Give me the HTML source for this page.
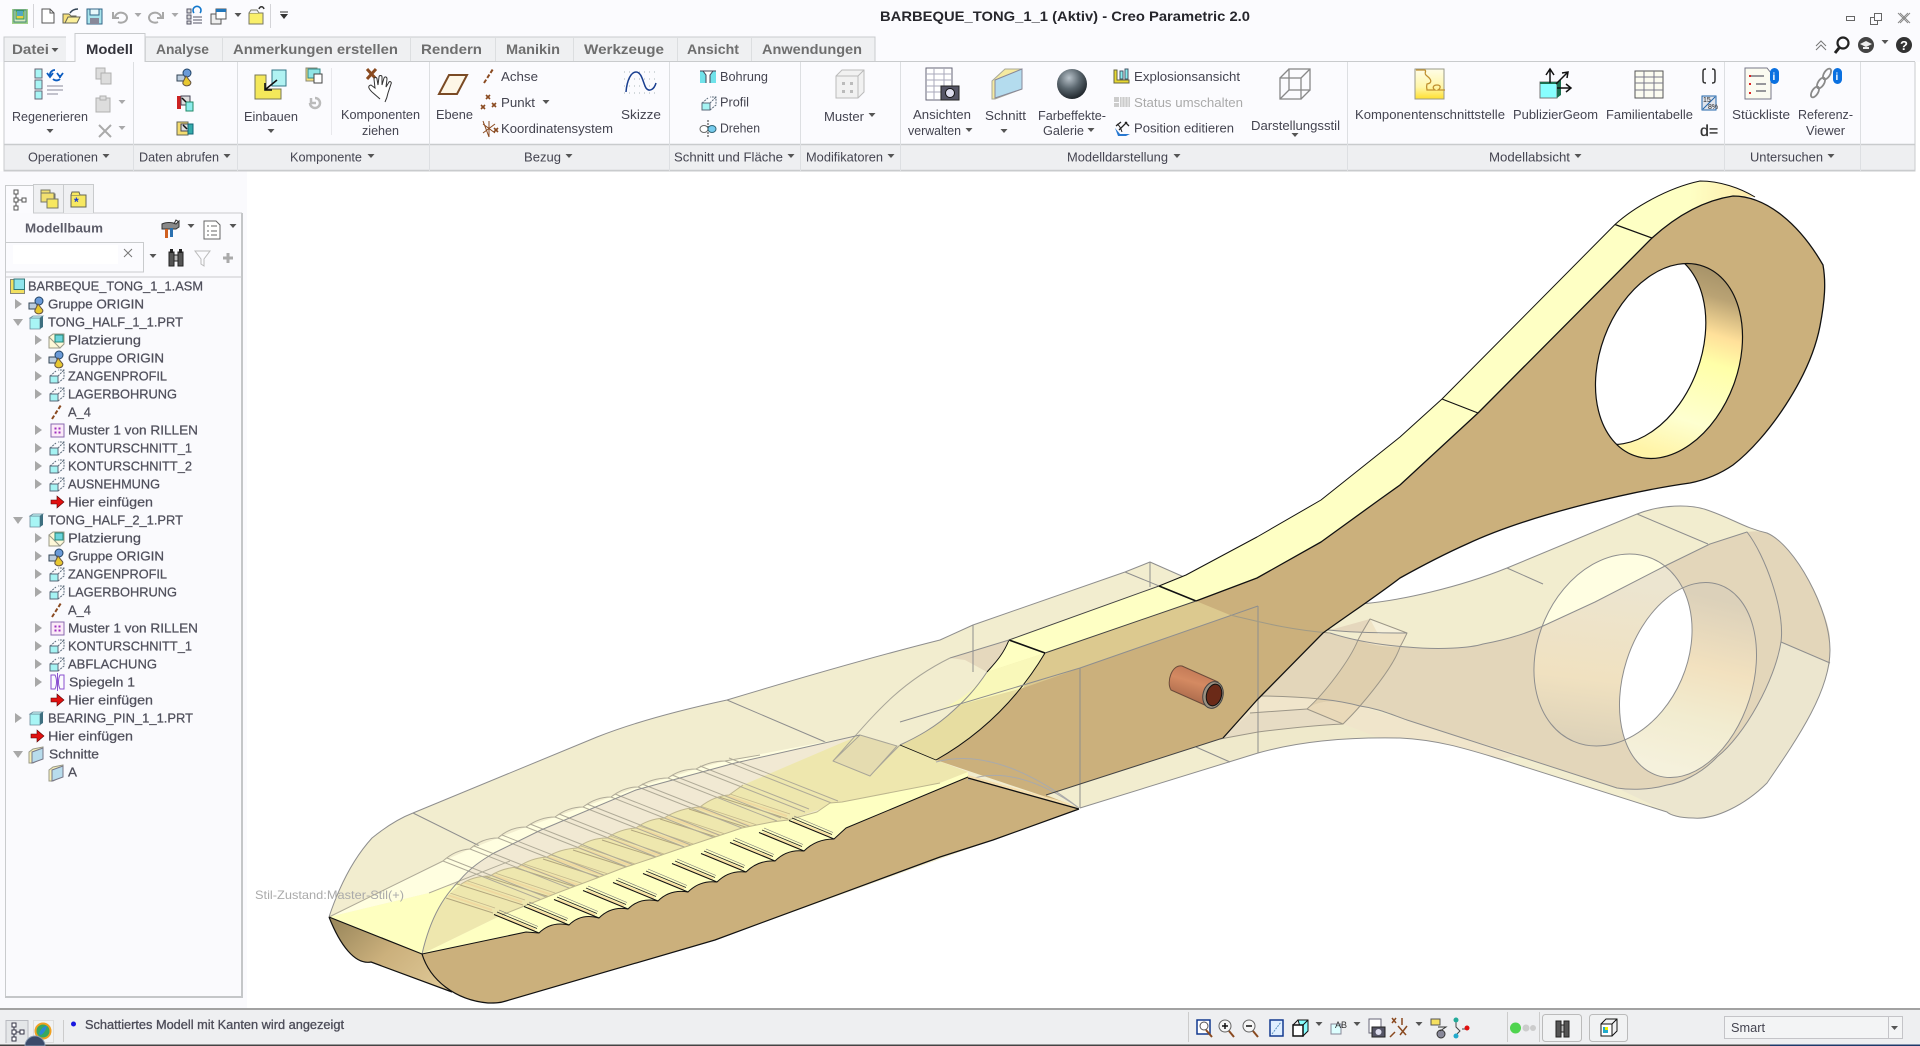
<!DOCTYPE html>
<html><head><meta charset="utf-8"><style>
html,body{margin:0;padding:0;background:#fff;width:1920px;height:1046px;overflow:hidden}
svg{display:block;font-family:"Liberation Sans",Arial,sans-serif}
text{font-size:12.5px;fill:#444450}
.t{font-size:14px;font-weight:bold;fill:#6e6e6e}
.r{font-size:13px;fill:#50505c;stroke:#50505c;stroke-width:.25}
.g{fill:none;stroke:#8e8e8e;stroke-width:1}
.b{fill:none;stroke:#111;stroke-width:1.3}
</style></head><body>
<svg width="1920" height="1046" viewBox="0 0 1920 1046" xmlns="http://www.w3.org/2000/svg">
<defs>
<path id="dd" d="M-3.5,-2h7l-3.5,4z" fill="#555"/>
<path id="tr" d="M-3,-5l7,5l-7,5z" fill="#a8a8a8"/>
<path id="td" d="M-5,-3h10l-5,7z" fill="#a8a8a8"/>
<g id="prf"><path d="M1,8h8v7h-8z" fill="#a5f3f3" stroke="#5a6a7a"/><path d="M1,8l6,-5M9,8l6,-6M9,15l6,-5V2H9" fill="none" stroke="#5a6a7a" stroke-dasharray="2 1"/></g>
<g id="cube"><path d="M1,3h10v11h-10z" fill="#a8f5f5" stroke="#6a8a9a" stroke-width=".8"/><path d="M1,3l3,-2h10l-3,2z" fill="#c8fafa" stroke="#6a8a9a" stroke-width=".8"/><path d="M11,3l3,-2v11l-3,2z" fill="#3e6f80"/></g>
<g id="org"><path d="M0,6h8v6h-8z" fill="#bcd" stroke="#345"/><circle cx="10" cy="4" r="4" fill="#6a9ad8" stroke="#246"/><path d="M9,7l4,5a4,3 0 1 1 -7,1z" fill="#e8c830" stroke="#654"/></g>
<g id="axi"><path d="M2,15L11,1" stroke="#8a4a20" stroke-width="2" stroke-dasharray="4 2" fill="none"/></g>
<g id="mus"><rect x="1" y="1" width="13" height="13" fill="#fbeaf8" stroke="#8a6ab0"/><path d="M5,5h1v1h-1zM9,5h1v1h-1zM5,9h1v1h-1zM9,9h1v1h-1z" fill="#a030c0" stroke="#a030c0"/></g>
<g id="hie"><path d="M0,5h6v-4l7,6l-7,6v-4h-6z" fill="#e01010" stroke="#500" stroke-width=".6"/></g>
<g id="sec"><path d="M0,5l4,-3l10,-2v11l-10,5l-4,0z" fill="#f6efb8" stroke="#998"/><path d="M3,5l11,-4v11l-11,4z" fill="#b8dcec" stroke="#778"/></g>
<g id="pla"><path d="M0,4h11v11h-11z" fill="#fdf8d8" stroke="#998"/><path d="M0,4l4,-3h11v10l-4,4z" fill="#fdf8d8" stroke="#998"/><path d="M6,2h8v7h-8z" fill="#6cd4dc" stroke="#287"/></g>
<g id="ridB" fill="none"><path d="M-4,-3L-41,-18" stroke="#f9e0a2" stroke-width="2.400"/><path d="M0,0L-45,-18.500" stroke="#111" stroke-width="1.100"/><path d="M-2,-4.500L-42,-21" stroke="#222" stroke-width=".8"/><path d="M-1,-6.500L-40,-23" stroke="#777" stroke-width=".6"/></g>
<g id="ridT" fill="none"><path d="M-47,-23L-112,-45" stroke="#f0d9a0" stroke-width="2"/><path d="M-46,-20L-115,-42" stroke="#b2a67e" stroke-width="1"/><path d="M-44,-25L-110,-47" stroke="#c4b78c" stroke-width=".8"/></g>
<linearGradient id="wall" x1="1710" y1="270" x2="1650" y2="462" gradientUnits="userSpaceOnUse"><stop offset="0" stop-color="#a8946a"/><stop offset=".12" stop-color="#baa374"/><stop offset=".3" stop-color="#ffe09a"/><stop offset=".44" stop-color="#ffffa8"/><stop offset=".75" stop-color="#feffd0"/><stop offset=".95" stop-color="#fff4a8"/></linearGradient>
<linearGradient id="wall2" x1="1720" y1="600" x2="1680" y2="770" gradientUnits="userSpaceOnUse"><stop offset="0" stop-color="#dcd1ba"/><stop offset=".4" stop-color="#f2e1bf"/><stop offset=".7" stop-color="#f2ecd0"/><stop offset="1" stop-color="#f5f1dc"/></linearGradient>
<linearGradient id="wall3" x1="1600" y1="580" x2="1580" y2="745" gradientUnits="userSpaceOnUse"><stop offset="0" stop-color="#ece5d0"/><stop offset=".6" stop-color="#f0e1c0"/><stop offset="1" stop-color="#dcd1b8"/></linearGradient>
<linearGradient id="rimg" x1="1690" y1="190" x2="1755" y2="195" gradientUnits="userSpaceOnUse"><stop offset="0" stop-color="#feffc4"/><stop offset="1" stop-color="#ffe9a8"/></linearGradient>
<linearGradient id="capg" x1="340" y1="920" x2="420" y2="1000" gradientUnits="userSpaceOnUse"><stop offset="0" stop-color="#9d8a5e"/><stop offset=".5" stop-color="#cbb07c"/><stop offset="1" stop-color="#dcc593"/></linearGradient>
<linearGradient id="pin" x1="1192" y1="660" x2="1180" y2="700" gradientUnits="userSpaceOnUse"><stop offset="0" stop-color="#b87050"/><stop offset=".5" stop-color="#d48a62"/><stop offset="1" stop-color="#a8684a"/></linearGradient>
<linearGradient id="kmp" x1="0" y1="0" x2="0" y2="1"><stop offset="0" stop-color="#fffde8"/><stop offset=".6" stop-color="#fff6a8"/><stop offset="1" stop-color="#ffe030"/></linearGradient>
<radialGradient id="sph" cx=".4" cy=".3" r=".8"><stop offset="0" stop-color="#b8c2ca"/><stop offset=".45" stop-color="#5c6870"/><stop offset="1" stop-color="#10151a"/></radialGradient>
<clipPath id="c1"><ellipse cx="1669" cy="361" rx="100.8" ry="68.9" transform="rotate(-69.6 1669 361)"/></clipPath>
<clipPath id="c2"><ellipse cx="1688" cy="680" rx="100.3" ry="64.4" transform="rotate(-72.3 1688 680)"/></clipPath>
<clipPath id="c3"><ellipse cx="1613" cy="650" rx="99.5" ry="74.6" transform="rotate(-66.6 1613 650)"/></clipPath>
<clipPath id="ct"><path d="M460,885Q472,876 490,876Q502,868 518,867Q531,858 547,857Q560,849 577,848Q590,838 607,838Q620,829 636,828Q648,819 664,818Q680,808 700,807Q714,796 729,795L743,785L860,735L897,746L900,745L936,760L968,772L940,783L842,802L502,915L422,954C431,915 445,895 460,880Z"/></clipPath>
</defs>

<!-- backgrounds -->
<rect width="1920" height="1046" fill="#fff"/>
<rect width="1920" height="62" fill="#fbfbfe"/>
<rect x="0" y="171" width="247" height="838" fill="#fafafd"/>
<rect x="4" y="62" width="1911" height="82" fill="#fbfbfe"/>
<rect x="4" y="145" width="1911" height="26" fill="#eeeff1"/>
<path d="M4,62V171H1915V62" fill="none" stroke="#c9cbcd" stroke-width="1"/>
<path d="M4,144.5H1915M4,170.5H1915" stroke="#c9cbcd" stroke-width="1.5"/>
<path d="M133.500,62V171M237.500,62V171M429.500,62V171M669.500,62V171M800.500,62V171M900.500,62V171M1347.500,62V171M1724.500,62V171M1860.500,62V171" stroke="#dddfe2"/>
<path d="M331.500,68V135" stroke="#e8e8ec"/>

<!-- tabs -->
<rect x="4" y="37" width="871" height="24.500" fill="#eff0f2" stroke="#c9cbcd"/>
<path d="M66.500,37V62M145.500,37V62M222.500,37V62M410.500,37V62M495.500,37V62M573.500,37V62M677.500,37V62M751.500,37V62" stroke="#dcdee0"/>
<path d="M66,36h9v26h-9z" fill="#fbfbfe"/>
<path d="M66,61.500H75" stroke="#c9cbcd"/>
<path d="M75,62V33.500h70V62" fill="#fbfbfe" stroke="#c9cbcd"/>
<path d="M4,61.500H75M145,61.500H1915" stroke="#c9cbcd" stroke-width="1"/>
<text class="t" x="12" y="54" textLength="37" lengthAdjust="spacingAndGlyphs">Datei</text><use href="#dd" x="55" y="50"/>
<text class="t" x="86" y="54" textLength="47" lengthAdjust="spacingAndGlyphs" style="fill:#33333b">Modell</text>
<text class="t" x="156" y="54" textLength="53" lengthAdjust="spacingAndGlyphs">Analyse</text>
<text class="t" x="233" y="54" textLength="165" lengthAdjust="spacingAndGlyphs">Anmerkungen erstellen</text>
<text class="t" x="421" y="54" textLength="61" lengthAdjust="spacingAndGlyphs">Rendern</text>
<text class="t" x="506" y="54" textLength="54" lengthAdjust="spacingAndGlyphs">Manikin</text>
<text class="t" x="584" y="54" textLength="80" lengthAdjust="spacingAndGlyphs">Werkzeuge</text>
<text class="t" x="687" y="54" textLength="52" lengthAdjust="spacingAndGlyphs">Ansicht</text>
<text class="t" x="762" y="54" textLength="100" lengthAdjust="spacingAndGlyphs">Anwendungen</text>

<!-- title -->
<text x="880" y="21" textLength="370" lengthAdjust="spacingAndGlyphs" style="font-size:14px;font-weight:bold;fill:#26262c">BARBEQUE_TONG_1_1 (Aktiv) - Creo Parametric 2.0</text>

<!-- quick access -->
<g>
<rect x="12" y="9" width="16" height="15" fill="#9fd08a"/><rect x="14" y="10" width="12" height="12" fill="#d8e8c0" stroke="#487"/><rect x="16" y="11" width="8" height="8" fill="#e8d040" stroke="#296"/><rect x="17" y="11" width="6" height="5" fill="#50a8c0"/>
<path d="M33.500,4V28M270.500,4V28" stroke="#d4d4d8"/>
<path d="M42,9h8l4,4v10h-12z" fill="#fff" stroke="#555"/><path d="M50,9v4h4" fill="none" stroke="#555"/>
<path d="M63,14h6l2,2h5v7h-13z" fill="#f7e07a" stroke="#665"/><path d="M65,23l3,-6h12l-3,6z" fill="#fbef9a" stroke="#665"/><path d="M70,13c2,-3 5,-4 8,-4" fill="none" stroke="#345" stroke-width="1.600"/>
<rect x="87" y="9" width="15" height="15" fill="#a8e4ec" stroke="#368"/><rect x="90" y="9" width="9" height="6" fill="#e8f8fa" stroke="#368"/><rect x="90" y="18" width="9" height="6" fill="#889"/>
<path d="M115,18a6,5 0 1 1 3,4M113,12v6h6" fill="none" stroke="#a8a8a8" stroke-width="2"/>
<use href="#dd" x="138" y="15" opacity=".5"/>
<path d="M161,18a6,5 0 1 0 -3,4M163,12v6h-6" fill="none" stroke="#a8a8a8" stroke-width="2"/>
<use href="#dd" x="175" y="15" opacity=".5"/>
<path d="M187,9h4v4h-4zM187,15h4v4h-4zM187,21h4v3h-4z" fill="#ddd" stroke="#556"/><path d="M193,17h9M193,20h9M193,23h9" stroke="#556"/><path d="M194,13a4,4 0 1 1 6,0" fill="none" stroke="#17c" stroke-width="1.600"/>
<rect x="211" y="14" width="10" height="10" fill="#eee" stroke="#555"/><rect x="216" y="9" width="10" height="10" fill="#fff" stroke="#555"/><rect x="216" y="9" width="10" height="3" fill="#27b"/>
<use href="#dd" x="238" y="15"/>
<path d="M249,13h14v11h-14z" fill="#f9ef6a" stroke="#776"/><path d="M249,13l2,-3h6l2,3" fill="#eee" stroke="#776"/><path d="M259,9c1,-3 4,-3 5,0" fill="none" stroke="#333" stroke-width="1.500"/>
<path d="M280,12h8" stroke="#333"/><path d="M280,14h8l-4,5z" fill="#333"/>
</g>

<!-- window controls -->
<g stroke="#666" fill="none">
<rect x="1846.500" y="16.500" width="8" height="4"/>
<rect x="1870.500" y="17.500" width="7" height="7"/><rect x="1874.500" y="13.500" width="7" height="7" fill="#fbfbfe"/>
<path d="M1898,13l10,10M1908,13l-10,10M1900,13l10,10M1910,13l-10,10" stroke="#888"/>
<path d="M1816,46l5,-5l5,5M1816,50l5,-5l5,5" stroke="#777"/>
<circle cx="1843" cy="43" r="5.500" stroke="#222" stroke-width="2.200"/><path d="M1839,48l-4,5" stroke="#222" stroke-width="3"/>
</g>
<circle cx="1866" cy="45" r="8" fill="#444"/><path d="M1860,44l6,-3l6,3l-6,3zM1863,47v2h6v-2" fill="#eee"/>
<use href="#dd" x="1885" y="42"/>
<circle cx="1904" cy="45" r="8" fill="#333"/><text x="1900" y="50" style="font-size:13px;font-weight:bold;fill:#fff">?</text>

<!-- ribbon texts -->
<text x="12" y="121" textLength="76" lengthAdjust="spacingAndGlyphs">Regenerieren</text><use href="#dd" x="50" y="131"/>
<text x="244" y="121" textLength="54" lengthAdjust="spacingAndGlyphs">Einbauen</text><use href="#dd" x="271" y="131"/>
<text x="341" y="119" textLength="79" lengthAdjust="spacingAndGlyphs">Komponenten</text>
<text x="362" y="135" textLength="37" lengthAdjust="spacingAndGlyphs">ziehen</text>
<text x="436" y="119" textLength="37" lengthAdjust="spacingAndGlyphs">Ebene</text>
<text x="501" y="81" textLength="37" lengthAdjust="spacingAndGlyphs">Achse</text>
<text x="501" y="107" textLength="34" lengthAdjust="spacingAndGlyphs">Punkt</text><use href="#dd" x="546" y="102"/>
<text x="501" y="133" textLength="112" lengthAdjust="spacingAndGlyphs">Koordinatensystem</text>
<text x="621" y="119" textLength="40" lengthAdjust="spacingAndGlyphs">Skizze</text>
<text x="720" y="81" textLength="48" lengthAdjust="spacingAndGlyphs">Bohrung</text>
<text x="720" y="106.500" textLength="29" lengthAdjust="spacingAndGlyphs">Profil</text>
<text x="720" y="132.500" textLength="40" lengthAdjust="spacingAndGlyphs">Drehen</text>
<text x="824" y="121" textLength="40" lengthAdjust="spacingAndGlyphs">Muster</text><use href="#dd" x="872" y="115"/>
<text x="913" y="119" textLength="58" lengthAdjust="spacingAndGlyphs">Ansichten</text>
<text x="908" y="135" textLength="53" lengthAdjust="spacingAndGlyphs">verwalten</text><use href="#dd" x="969" y="130"/>
<text x="985" y="120" textLength="41" lengthAdjust="spacingAndGlyphs">Schnitt</text><use href="#dd" x="1004" y="131"/>
<text x="1038" y="120" textLength="68" lengthAdjust="spacingAndGlyphs">Farbeffekte-</text>
<text x="1043" y="135" textLength="41" lengthAdjust="spacingAndGlyphs">Galerie</text><use href="#dd" x="1091" y="130"/>
<text x="1134" y="81" textLength="106" lengthAdjust="spacingAndGlyphs">Explosionsansicht</text>
<text x="1134" y="107" textLength="109" lengthAdjust="spacingAndGlyphs" style="fill:#aaa">Status umschalten</text>
<text x="1134" y="132.500" textLength="100" lengthAdjust="spacingAndGlyphs">Position editieren</text>
<text x="1251" y="130" textLength="89" lengthAdjust="spacingAndGlyphs">Darstellungsstil</text><use href="#dd" x="1295" y="135"/>
<text x="1355" y="119" textLength="150" lengthAdjust="spacingAndGlyphs">Komponentenschnittstelle</text>
<text x="1513" y="119" textLength="85" lengthAdjust="spacingAndGlyphs">PublizierGeom</text>
<text x="1606" y="119" textLength="87" lengthAdjust="spacingAndGlyphs">Familientabelle</text>
<text x="1732" y="119" textLength="58" lengthAdjust="spacingAndGlyphs">Stückliste</text>
<text x="1798" y="119" textLength="55" lengthAdjust="spacingAndGlyphs">Referenz-</text>
<text x="1806" y="135" textLength="39" lengthAdjust="spacingAndGlyphs">Viewer</text>

<!-- group labels -->
<text x="28" y="161.500" textLength="70" lengthAdjust="spacingAndGlyphs">Operationen</text><use href="#dd" x="106" y="156"/>
<text x="139" y="161.500" textLength="80" lengthAdjust="spacingAndGlyphs">Daten abrufen</text><use href="#dd" x="227" y="156"/>
<text x="290" y="161.500" textLength="72" lengthAdjust="spacingAndGlyphs">Komponente</text><use href="#dd" x="371" y="156"/>
<text x="524" y="161.500" textLength="37" lengthAdjust="spacingAndGlyphs">Bezug</text><use href="#dd" x="569" y="156"/>
<text x="674" y="161.500" textLength="109" lengthAdjust="spacingAndGlyphs">Schnitt und Fläche</text><use href="#dd" x="791" y="156"/>
<text x="806" y="161.500" textLength="77" lengthAdjust="spacingAndGlyphs">Modifikatoren</text><use href="#dd" x="891" y="156"/>
<text x="1067" y="161.500" textLength="101" lengthAdjust="spacingAndGlyphs">Modelldarstellung</text><use href="#dd" x="1177" y="156"/>
<text x="1489" y="161.500" textLength="81" lengthAdjust="spacingAndGlyphs">Modellabsicht</text><use href="#dd" x="1578" y="156"/>
<text x="1750" y="161.500" textLength="73" lengthAdjust="spacingAndGlyphs">Untersuchen</text><use href="#dd" x="1831" y="156"/>

<!-- ribbon icons -->
<g>
<!-- regen -->
<g fill="#a8f5f5" stroke="#667"><rect x="35" y="69" width="7" height="9"/><rect x="35" y="80" width="7" height="9"/><rect x="35" y="91" width="7" height="8"/></g>
<path d="M47,86h16M47,90h16M47,94h11" stroke="#889"/>
<path d="M50,76a5,5 0 0 1 5,-6M47,73l3,4l3,-4M53,79a5,5 0 0 0 7,0M63,73l-3,4l-3,-4M60,78v-3" fill="none" stroke="#0b5cc0" stroke-width="1.800"/>
<!-- gray edit -->
<g fill="#ddd" stroke="#b0b0b0"><rect x="96" y="68" width="9" height="11"/><rect x="101" y="73" width="10" height="11"/><rect x="96" y="98" width="14" height="14"/><rect x="100" y="96" width="6" height="4"/></g>
<path d="M99,125l12,12M111,125l-12,12" stroke="#aaa" stroke-width="2"/>
<use href="#dd" x="122" y="102" opacity=".5"/><use href="#dd" x="122" y="128" opacity=".5"/>
<!-- data -->
<use href="#org" transform="translate(177,69)"/>
<path d="M177,96h4v13h-4z" fill="#c22"/><rect x="181" y="96" width="9" height="9" fill="#ddd" stroke="#445"/><rect x="186" y="102" width="7" height="9" fill="#8cecec" stroke="#286"/><path d="M182,98l4,4" stroke="#111" stroke-width="1.500"/>
<path d="M177,122h11v13h-11z" fill="#f4dc70" stroke="#665"/><rect x="181" y="124" width="8" height="7" fill="#ddd" stroke="#445"/><rect x="188" y="124" width="5" height="10" fill="#3aa" stroke="#167"/><path d="M183,125l4,4" stroke="#111" stroke-width="1.500"/>
<!-- einbauen -->
<path d="M255,75h11v14h15v10h-26z" fill="#f4e85a" stroke="#775"/>
<path d="M272,70h14v16h-14z" fill="#b0f2f2" stroke="#378"/>
<path d="M277,80l-11,9M265,83v7h7" fill="none" stroke="#111" stroke-width="1.600"/>
<rect x="306" y="68" width="11" height="13" fill="#f6e07a" stroke="#887" /><rect x="308" y="69" width="12" height="9" fill="#8fe5e5" stroke="#388"/><path d="M315,74h7v9h-8v-9z" fill="#fff" stroke="#444"/>
<path d="M310,103a5,5 0 1 0 5,-5M311,98v5h5" fill="none" stroke="#bbb" stroke-width="2.500"/>
<!-- hand -->
<path d="M367,69l9,10M376,69l-9,10" stroke="#8a4a20" stroke-width="3"/>
<path d="M372,92c-3,-3 -5,-6 -1,-7l4,3l-1,-9c0,-2 3,-2 3,0l1,6l1,-8c0,-2 3,-2 3,0l0,8l2,-7c1,-2 3,-1 3,1l-1,8l3,-5c1,-1 3,0 2,2l-3,9c-1,5 -2,7 -3,9" fill="#fff" stroke="#333"/><path d="M372,92l8,7" stroke="#333"/>
<!-- ebene -->
<path d="M449,75h18l-10,19h-18z" fill="#fdf6e6" stroke="#7a4a24" stroke-width="2"/>
<use href="#axi" transform="translate(482,68)"/>
<g stroke="#8a4a20" stroke-width="1.600"><path d="M486,95l4,4M490,95l-4,4M481,105l4,4M485,105l-4,4M492,103l4,4M496,103l-4,4"/><path d="M483,121l6,16M495,124l-12,9M483,124l12,9M489,121v16" stroke-width="1"/><path d="M494,128l4,4M498,128l-4,4"/></g>
<!-- skizze -->
<path d="M624,72h33M624,79h33M624,86h33M624,93h33" fill="none" stroke="#a8b4b8" stroke-dasharray="1 4"/>
<path d="M626,92c1,-12 5,-20 10,-20c6,0 7,11 10,16c3,4 8,2 10,-5" fill="none" stroke="#1a3f90" stroke-width="1.500"/>
<!-- bohrung etc -->
<rect x="700" y="71" width="16" height="12" fill="#6fe2ea"/><path d="M703,71h10l-3,4v8h-4v-8z" fill="#fff"/><path d="M700,71h16M703,71l3,4v8M713,71l-3,4v8" fill="none" stroke="#445"/>
<use href="#prf" transform="translate(701,95)"/>
<path d="M708,120v17" stroke="#333" stroke-dasharray="2 1"/><ellipse cx="704" cy="129" rx="4" ry="3.500" fill="#fff" stroke="#666"/><ellipse cx="712" cy="129" rx="4" ry="3.500" fill="#7ce" stroke="#367"/>
<!-- muster -->
<path d="M836,76l6,-6h22v22l-6,6h-22z" fill="#f1f1f1" stroke="#bbb"/><path d="M858,76h-22M858,76v22M858,76l6,-6" stroke="#bbb"/>
<path d="M842,82h3v3h-3zM850,82h3v3h-3zM842,90h3v3h-3zM850,90h3v3h-3z" fill="#bbb"/>
<!-- ansichten -->
<rect x="926" y="68" width="26" height="32" fill="#fff" stroke="#667"/><path d="M926,74h26M926,80h26M926,86h26M926,92h26M934,68v32M944,68v32" stroke="#aab"/>
<rect x="941" y="86" width="18" height="14" fill="#556" stroke="#222"/><circle cx="950" cy="93" r="4.500" fill="#dde" stroke="#111"/>
<!-- schnitt -->
<path d="M992,81l13,-12h17v20l-27,10h-3z" fill="#f5eaa0" stroke="#aa9"/><path d="M995,80l27,-11v20l-27,9z" fill="#b4dcee" stroke="#889"/>
<!-- sphere -->
<circle cx="1072" cy="84" r="15" fill="url(#sph)"/>
<!-- explosion/status/position -->
<path d="M1114,70h3v10h12v3h-15z" fill="#e8d830" stroke="#664"/><path d="M1120,71h3v8h-3zM1125,69h3v10h-3z" fill="#8ee" stroke="#456"/>
<rect x="1114" y="97" width="5" height="5" fill="#ccc"/><rect x="1114" y="103" width="5" height="4" fill="#ccc"/><rect x="1120" y="97" width="10" height="10" fill="#ccc"/><path d="M1122,97v10M1125,97v10M1128,97v10" stroke="#eee"/>
<path d="M1116,126l5,-4M1119,130l8,-8M1125,122l4,4" stroke="#222" stroke-width="1.300"/><path d="M1115,128l5,6h10l-4,2h-8z" fill="#2878d0"/><path d="M1117,124c3,2 4,5 5,8" stroke="#222" fill="none"/>
<!-- darst -->
<g fill="none" stroke="#888" stroke-width="1.300"><rect x="1280" y="78" width="21" height="21"/><rect x="1289" y="69" width="21" height="21"/><path d="M1280,78l9,-9M1301,78l9,-9M1301,99l9,-9M1280,99l9,-9"/></g>
<!-- komp -->
<rect x="1415" y="69" width="29" height="30" fill="url(#kmp)" stroke="#9a9a88"/><path d="M1416,70h9c2,2 -2,3 2,6c4,3 6,7 0,8c-1,4 0,4 0,6h8c-3,-2 -2,-5 2,-5c4,0 4,3 1,5h7" fill="none" stroke="#c09030" stroke-width="1.300"/>
<!-- publizier -->
<rect x="1540" y="82" width="17" height="16" fill="#8ff" stroke="#777"/><path d="M1540,82h17v2h-17z" fill="#1c7050"/><path d="M1557,82l4,-3v16l-4,3z" fill="#1c7050"/>
<path d="M1550,83V70M1546,75l4,-6l4,6M1556,84l11,-11M1562,73l6,-1l-1,6M1557,88h13M1566,84l5,4l-5,4" fill="none" stroke="#111" stroke-width="1.500"/>
<!-- familie -->
<rect x="1635" y="71" width="28" height="27" fill="#fbfbf0" stroke="#555"/><path d="M1635,77h28M1635,83h28M1635,90h28M1644,71v27M1654,71v27" stroke="#778"/>
<!-- braces etc -->
<path d="M1706,69c-3,0 -3,1 -3,4v6c0,3 0,4 3,4M1712,69c3,0 3,1 3,4v6c0,3 0,4 -3,4" fill="none" stroke="#333" stroke-width="1.500"/>
<rect x="1702" y="96" width="14" height="14" fill="#e0e4ec" stroke="#26a"/><path d="M1703,109l12,-12" stroke="#26a"/><text x="1703" y="102" style="font-size:7px;fill:#222">15</text><text x="1708" y="109" style="font-size:7px;fill:#222">8%</text>
<text x="1700" y="136" style="font-size:16px;fill:#333;stroke:#333;stroke-width:.3">d=</text>
<!-- stueck -->
<path d="M1745,68h22l4,5v26h-26z" fill="#fbfbf0" stroke="#778"/><path d="M1750,76h14M1756,84h10M1756,91h10" stroke="#334"/><path d="M1749,76h2M1749,84h2M1749,93h2" stroke="#d22" stroke-width="2"/>
<rect x="1770" y="68" width="9" height="16" rx="4.500" fill="#0a70e0"/><text x="1772.500" y="80" style="font-size:10px;font-weight:bold;fill:#fff">i</text>
<!-- referenz -->
<g fill="none" stroke="#8a8a8a" stroke-width="1.800"><ellipse cx="1815" cy="92" rx="6" ry="3" transform="rotate(-58 1815 92)"/><ellipse cx="1821" cy="83" rx="6" ry="3" transform="rotate(-58 1821 83)"/><ellipse cx="1827" cy="74" rx="6" ry="3" transform="rotate(-58 1827 74)"/></g>
<rect x="1833" y="68" width="9" height="16" rx="4.500" fill="#0a70e0"/><text x="1835.500" y="80" style="font-size:10px;font-weight:bold;fill:#fff">i</text>
</g>

<!-- model tree panel -->
<path d="M5.500,997.500V213.500H34V185.500H5.500" fill="#fafafd" stroke="none"/>
<path d="M5.500,213V997M5.500,997.500H242" stroke="#c9cbcd" stroke-width="1"/>
<path d="M242,213V998M5,997H243" stroke="#c4c6c8" stroke-width="2"/>
<path d="M33.500,213H242" stroke="#c9cbcd"/>
<path d="M5.500,213V185.500H33.500V213" fill="#fbfbfe" stroke="#c9cbcd"/>
<path d="M33.500,213V184.500H63.500V213H33.500zM63.500,213V184.500H93.500V213" fill="#eff0f2" stroke="#c9cbcd"/>
<g fill="#fff" stroke="#555"><rect x="14" y="190" width="4" height="4"/><rect x="14" y="198" width="4" height="4"/><rect x="14" y="206" width="4" height="4"/><rect x="22" y="198" width="4" height="4"/><path d="M16,194v4M16,202v4M18,200h4" fill="none"/></g>
<path d="M41,190h9v3h-9zM46,194h9v4h-9z" fill="#f2e070" stroke="#776"/><rect x="41" y="193" width="13" height="9" fill="#f2e070" stroke="#776"/><rect x="47" y="199" width="11" height="9" fill="#f7e860" stroke="#776"/>
<rect x="71" y="195" width="15" height="12" fill="#f7e860" stroke="#665"/><path d="M71,195l1,-3h7l1,3" fill="#f7e860" stroke="#665"/><text x="74" y="206" style="font-size:12px;font-weight:bold;fill:#1838d0">*</text>
<text x="25" y="232.500" textLength="78" lengthAdjust="spacingAndGlyphs" style="font-size:13px;font-weight:bold;fill:#5c5c68">Modellbaum</text>
<path d="M162,224c4,-2 10,-2 14,0l3,-3v6l-3,2h-14z" fill="#888" stroke="#333"/><path d="M165,229h3v9h-3z" fill="#d06020"/><path d="M170,228h3v9h-3z" fill="#2a70b0"/><path d="M174,224l2,-4l3,2" stroke="#333" fill="none"/>
<use href="#dd" x="191" y="226"/>
<path d="M204,221h12l4,4v14h-16z" fill="#fff" stroke="#666"/><path d="M207,226h2M207,231h2M207,235h2M211,226h6M211,231h6M211,235h6" stroke="#666"/>
<use href="#dd" x="233" y="226"/>
<rect x="5.500" y="242.500" width="138" height="29.500" fill="#fbfbfe" stroke="#c9cbcd"/>
<rect x="13" y="245" width="105" height="19" fill="#fff"/>
<path d="M124,249l8,8M132,249l-8,8" stroke="#777"/>
<use href="#dd" x="153" y="256"/>
<path d="M169,252h5v14h-5zM178,252h5v14h-5z" fill="#555" stroke="#222"/><path d="M174,255h4v6h-4z" fill="#bbb" stroke="#222"/><path d="M170,249h3v4h-3zM179,249h3v4h-3z" fill="#222"/>
<path d="M195,251h15l-6,8v7l-3,-2v-5z" fill="#fbfbfe" stroke="#bbb"/>
<path d="M223,258h10M228,253v10" stroke="#aaa" stroke-width="3"/>
<path d="M6,277H242" stroke="#c9cbcd" stroke-width="1"/>

<!-- tree rows -->
<g>
<rect x="10.500" y="279.500" width="14" height="14" fill="#f2e060" stroke="#887"/><rect x="14" y="279" width="10.500" height="10.500" fill="#8fe4ec" stroke="#377"/>
<text class="r" x="28" y="290.500" textLength="175" lengthAdjust="spacingAndGlyphs">BARBEQUE_TONG_1_1.ASM</text>
<use href="#tr" x="18" y="304"/><use href="#org" transform="translate(29,297)"/><text class="r" x="48" y="308.500" textLength="96" lengthAdjust="spacingAndGlyphs">Gruppe ORIGIN</text>
<use href="#td" x="18" y="322"/><use href="#cube" transform="translate(29,315)"/><text class="r" x="48" y="326.500" textLength="135" lengthAdjust="spacingAndGlyphs">TONG_HALF_1_1.PRT</text>
<use href="#tr" x="38" y="340"/><use href="#pla" transform="translate(49,333)"/><text class="r" x="68" y="344.500" textLength="73" lengthAdjust="spacingAndGlyphs">Platzierung</text>
<use href="#tr" x="38" y="358"/><use href="#org" transform="translate(49,351)"/><text class="r" x="68" y="362.500" textLength="96" lengthAdjust="spacingAndGlyphs">Gruppe ORIGIN</text>
<use href="#tr" x="38" y="376"/><use href="#prf" transform="translate(49,368)"/><text class="r" x="68" y="380.500" textLength="99" lengthAdjust="spacingAndGlyphs">ZANGENPROFIL</text>
<use href="#tr" x="38" y="394"/><use href="#prf" transform="translate(49,386)"/><text class="r" x="68" y="398.500" textLength="109" lengthAdjust="spacingAndGlyphs">LAGERBOHRUNG</text>
<use href="#axi" transform="translate(50,404)"/><text class="r" x="68" y="416.500" textLength="23" lengthAdjust="spacingAndGlyphs">A_4</text>
<use href="#tr" x="38" y="430"/><use href="#mus" transform="translate(50,423)"/><text class="r" x="68" y="434.500" textLength="130" lengthAdjust="spacingAndGlyphs">Muster 1 von RILLEN</text>
<use href="#tr" x="38" y="448"/><use href="#prf" transform="translate(49,440)"/><text class="r" x="68" y="452.500" textLength="124" lengthAdjust="spacingAndGlyphs">KONTURSCHNITT_1</text>
<use href="#tr" x="38" y="466"/><use href="#prf" transform="translate(49,458)"/><text class="r" x="68" y="470.500" textLength="124" lengthAdjust="spacingAndGlyphs">KONTURSCHNITT_2</text>
<use href="#tr" x="38" y="484"/><use href="#prf" transform="translate(49,476)"/><text class="r" x="68" y="488.500" textLength="92" lengthAdjust="spacingAndGlyphs">AUSNEHMUNG</text>
<use href="#hie" transform="translate(51,495)"/><text class="r" x="68" y="506.500" textLength="85" lengthAdjust="spacingAndGlyphs">Hier einfügen</text>
<use href="#td" x="18" y="520"/><use href="#cube" transform="translate(29,513)"/><text class="r" x="48" y="524.500" textLength="135" lengthAdjust="spacingAndGlyphs">TONG_HALF_2_1.PRT</text>
<use href="#tr" x="38" y="538"/><use href="#pla" transform="translate(49,531)"/><text class="r" x="68" y="542.500" textLength="73" lengthAdjust="spacingAndGlyphs">Platzierung</text>
<use href="#tr" x="38" y="556"/><use href="#org" transform="translate(49,549)"/><text class="r" x="68" y="560.500" textLength="96" lengthAdjust="spacingAndGlyphs">Gruppe ORIGIN</text>
<use href="#tr" x="38" y="574"/><use href="#prf" transform="translate(49,566)"/><text class="r" x="68" y="578.500" textLength="99" lengthAdjust="spacingAndGlyphs">ZANGENPROFIL</text>
<use href="#tr" x="38" y="592"/><use href="#prf" transform="translate(49,584)"/><text class="r" x="68" y="596.500" textLength="109" lengthAdjust="spacingAndGlyphs">LAGERBOHRUNG</text>
<use href="#axi" transform="translate(50,602)"/><text class="r" x="68" y="614.500" textLength="23" lengthAdjust="spacingAndGlyphs">A_4</text>
<use href="#tr" x="38" y="628"/><use href="#mus" transform="translate(50,621)"/><text class="r" x="68" y="632.500" textLength="130" lengthAdjust="spacingAndGlyphs">Muster 1 von RILLEN</text>
<use href="#tr" x="38" y="646"/><use href="#prf" transform="translate(49,638)"/><text class="r" x="68" y="650.500" textLength="124" lengthAdjust="spacingAndGlyphs">KONTURSCHNITT_1</text>
<use href="#tr" x="38" y="664"/><use href="#prf" transform="translate(49,656)"/><text class="r" x="68" y="668.500" textLength="89" lengthAdjust="spacingAndGlyphs">ABFLACHUNG</text>
<use href="#tr" x="38" y="682"/><path d="M51,675h4c2,4 2,10 0,14h-4zM64,675h-4c-2,4 -2,10 0,14h4zM57.500,673v18" fill="none" stroke="#8a50d0"/><text class="r" x="69" y="686.500" textLength="66" lengthAdjust="spacingAndGlyphs">Spiegeln 1</text>
<use href="#hie" transform="translate(51,693)"/><text class="r" x="68" y="704.500" textLength="85" lengthAdjust="spacingAndGlyphs">Hier einfügen</text>
<use href="#tr" x="18" y="718"/><use href="#cube" transform="translate(29,711)"/><text class="r" x="48" y="722.500" textLength="145" lengthAdjust="spacingAndGlyphs">BEARING_PIN_1_1.PRT</text>
<use href="#hie" transform="translate(31,729)"/><text class="r" x="48" y="740.500" textLength="85" lengthAdjust="spacingAndGlyphs">Hier einfügen</text>
<use href="#td" x="18" y="754"/><use href="#sec" transform="translate(29,747)"/><text class="r" x="49" y="758.500" textLength="50" lengthAdjust="spacingAndGlyphs">Schnitte</text>
<use href="#sec" transform="translate(49,765)"/><text class="r" x="68" y="776.500" textLength="9" lengthAdjust="spacingAndGlyphs">A</text>
</g>

<!-- ===== 3D MODEL ===== -->
<g stroke-linejoin="round">
<!-- translucent body silhouette -->
<path d="M329,917C338,890 352,860 372,838C388,825 400,818 413,813L597,737C640,720 690,708 727,700C800,678 880,655 940,640L973,625L1125,572L1150,562L1184,577L1300,620L1360,604C1400,601 1460,587 1507,568L1637,514C1660,505 1690,503 1710,511C1735,520 1745,528 1767,533C1795,545 1830,610 1830,650C1830,690 1800,735 1767,783C1745,805 1715,820 1693,818C1680,818 1670,815 1667,812L1500,759C1470,750 1440,740 1400,738C1350,737 1300,741 1258,753L1080,808L993,840L715,940L422,954Z" fill="#f2edcf"/>
<!-- lower right band -->
<path d="M1781,642L1830,663C1822,700 1800,735 1767,783C1745,805 1715,820 1693,818C1680,818 1670,815 1667,812L1617,788C1650,790 1680,783 1717,757C1745,735 1775,680 1781,642Z" fill="#ece6cf"/>
<!-- lower tong face -->
<path d="M1293,623L1330,633C1355,641 1380,645 1407,647C1440,650 1470,648 1483,644C1505,640 1525,634 1543,626L1595,602L1667,565L1710,544L1747,532C1755,531 1760,531 1767,533C1785,540 1805,570 1817,596C1825,615 1830,630 1830,640L1830,663L1781,642C1775,680 1745,735 1717,757C1700,775 1680,783 1667,785C1650,790 1630,790 1617,788L1407,720C1385,712 1375,708 1360,706C1335,699 1310,697 1287,697L1230,697Z" fill="#e3d6ba"/>
<!-- band below L1 -->
<path d="M1258,696C1300,697 1340,700 1360,706L1520,755L1500,759C1470,750 1440,740 1400,738C1350,737 1300,741 1258,753L1223,738Z" fill="#f0e5cb"/>
<path d="M1220,739L1258,732C1290,728 1320,725 1343,724L1380,738C1340,737 1300,741 1258,753L1220,765Z" fill="#efe9cb"/>
<path d="M1250,713L1307,709L1343,724C1310,725 1280,728 1258,732L1220,739Z" fill="#e7dcc4"/>
<!-- wedge -->
<path d="M1307,709C1325,693 1350,660 1358,640L1400,647C1395,662 1378,685 1360,706C1340,700 1320,699 1307,709Z" fill="#dfcfae"/>
<path d="M1307,709L1343,724L1360,706C1340,700 1320,699 1307,709Z" fill="#e9d9b9"/>
<path d="M1358,640C1362,632 1366,626 1370,619L1407,633C1405,638 1402,643 1400,647C1385,647 1370,645 1358,640Z" fill="#efe3c6"/>
<path d="M1370,619L1407,633L1378,634Z" fill="#f6f0da"/>
<path d="M1330,630L1370,619L1363,633Z" fill="#e5d7bd"/>
<path d="M1307,709C1325,693 1350,660 1358,640C1362,632 1366,626 1370,619L1407,633C1404,640 1402,643 1400,647C1395,662 1378,685 1360,706C1355,712 1349,718 1343,724Z" class="g" style="stroke:#9c9688"/>
<path d="M1250,713L1307,709M1220,739L1258,732C1290,728 1320,725 1343,724M1258,696C1280,696 1300,697 1320,699" class="g" style="stroke:#9c9688"/>
<!-- lower tong hole back ellipse -->
<g clip-path="url(#c3)"><rect x="1500" y="540" width="220" height="220" fill="url(#wall3)"/><path d="M1500,568L1637,514L1700,500L1667,565L1595,602L1543,626L1500,640Z" fill="#fffee2"/></g>
<g clip-path="url(#c2)"><rect x="1600" y="570" width="170" height="220" fill="url(#wall2)"/><ellipse cx="1613" cy="650" rx="99.500" ry="74.600" transform="rotate(-66.600 1613 650)" fill="#fff"/></g>
<ellipse cx="1613" cy="650" rx="99.500" ry="74.600" transform="rotate(-66.600 1613 650)" class="g"/>
<ellipse cx="1688" cy="680" rx="100.300" ry="64.400" transform="rotate(-72.300 1688 680)" class="g"/>
<!-- outlines lower tong -->
<path d="M1360,604C1400,601 1460,587 1507,568L1637,514C1660,505 1690,503 1710,511C1735,520 1745,528 1767,533C1795,545 1830,610 1830,650C1830,690 1800,735 1767,783C1745,805 1715,820 1693,818C1680,818 1670,815 1667,812L1500,759C1470,750 1440,740 1400,738C1350,737 1300,741 1258,753L1080,808" class="g"/>
<path d="M1330,633C1355,641 1380,645 1407,647C1440,650 1470,648 1483,644C1505,640 1525,634 1543,626L1595,602L1667,565L1710,544L1747,532C1765,555 1785,610 1781,642C1775,680 1745,735 1717,757C1700,775 1680,783 1667,785C1650,790 1630,790 1617,788L1407,720C1385,712 1375,708 1360,706C1345,702 1330,700 1320,699" class="g"/>
<path d="M1781,642L1830,663M1507,568L1543,584M1637,514L1708,544M1257,607C1280,620 1290,623 1293,623C1320,632 1365,633 1407,633M1258,606V753M1196,747L1230,762" class="g"/>

<!-- shell lines -->
<path d="M329,917C338,890 352,860 372,838C388,825 400,818 413,813L597,737C640,720 690,708 727,700C800,678 880,655 940,640L973,625L1125,572L1150,562L1184,577" class="g"/>
<path d="M413,813L510,861M727,700L830,744M973,625V672M1125,572L1230,615M1150,562V587M1080,668V808" class="g"/>

<!-- pale fan left of tip -->
<path d="M329,917L443,861L470,849L498,838L526,827L555,817L583,807L611,797L638,787L668,778L696,769L725,761L860,735L541,830L494,853L460,880L429,893Z" fill="#fffee0"/>
<!-- tan tint between C curve and tinted teeth -->
<path d="M422,954C431,915 445,895 460,880C470,868 482,860 494,853L541,830L636,790L735,763L860,735L743,785L729,795L700,807L664,818L636,828L607,838L577,848L547,857L518,867L490,876L460,885Z" fill="#f1e9d3"/>
<!-- tinted teeth -->
<path d="M460,885Q472,876 490,876Q502,868 518,867Q531,858 547,857Q560,849 577,848Q590,838 607,838Q620,829 636,828Q648,819 664,818Q680,808 700,807Q714,796 729,795L743,785L860,735L897,746L900,745L936,760L968,772L940,783L842,802L502,915L422,954C431,915 445,895 460,880Z" fill="#eee7ae"/>
<g clip-path="url(#ct)">
<use href="#ridT" x="569" y="925"/><use href="#ridT" x="599" y="918"/><use href="#ridT" x="628" y="909"/><use href="#ridT" x="658" y="901"/><use href="#ridT" x="688" y="892"/><use href="#ridT" x="717" y="882"/><use href="#ridT" x="746" y="872"/><use href="#ridT" x="775" y="861"/><use href="#ridT" x="804" y="851"/><use href="#ridT" x="834" y="839"/><use href="#ridT" x="539" y="933"/>
</g>
<path d="M460,885Q472,876 490,876Q502,868 518,867Q531,858 547,857Q560,849 577,848Q590,838 607,838Q620,829 636,828Q648,819 664,818Q680,808 700,807Q714,796 729,795L743,785" class="g" style="stroke:#c0b78f"/>
<!-- small wedge quad -->
<path d="M860,735L897,746L870,776L833,761Z" fill="#e5dcb0"/>
<path d="M833,761C870,720 895,685 950,658M870,776C880,765 890,755 900,745M833,761L860,735L897,746L870,776Z" class="g" style="stroke:#a8a598"/>
<!-- bright tip -->
<path d="M329,917L429,893Q445,885 460,885C445,895 431,915 422,954Z" fill="#feffc0"/>
<!-- ridge lines back -->
<g class="g" style="stroke:#b0ab98">
<path d="M443,861L552,904M470,849L579,892M498,838L607,881M526,827L635,870M555,817L664,860M583,807L692,850M611,797L720,840M638,787L747,830M668,778L777,821M696,769L805,812M725,761L834,804"/>
<path d="M447,858L556,901M474,846L583,889M502,835L611,878M530,824L639,867M559,814L668,857M587,804L696,847M615,794L724,837M642,784L751,827M672,775L781,818M700,766L809,809M729,758L838,801"/>
<path d="M329,917L443,861M429,893L510,861M443,861Q455,850 470,849Q482,838 498,838Q510,827 526,827Q540,817 555,817Q568,807 583,807Q596,797 611,797Q624,787 638,787Q652,778 668,778Q680,769 696,769Q710,761 725,761L760,755"/>
</g>
<path d="M422,954C431,915 445,895 460,880C470,868 482,860 494,853L541,830L636,790L735,763L860,735" class="g"/>

<!-- solid lower jaw -->
<path d="M329,917L422,954L452,992L371,962C355,965 340,945 329,917Z" fill="url(#capg)"/>
<path d="M422,954L526,932L539,933Q551,921 569,925Q581,913 599,918Q611,906 628,909Q640,897 658,901Q670,889 688,892Q700,880 717,882Q729,870 746,872Q758,860 775,861Q787,849 804,851Q816,839 834,839L846,828L968,777L1079,809L993,840L940,857L715,940L506,1001C500,1003 494,1003 488,1003C455,1000 430,980 422,954Z" fill="#cbb07c"/>
<!-- bright band -->
<path d="M422,954L502,915L557,893L597,878L623,868L653,858L682,848L712,838L742,828L772,822L788,820L817,812L830,803L842,802L940,783L968,772L968,777L846,828L834,839Q816,839 804,851Q787,849 775,861Q758,860 746,872Q729,870 717,882Q700,880 688,892Q670,889 658,901Q640,897 628,909Q611,906 599,918Q581,913 569,925Q551,921 539,933L526,932Z" fill="#feffc2"/>
<path d="M502,915L557,893L597,878L623,868L653,858L682,848L712,838L742,828L772,822L788,820L817,812L830,803L842,802L940,783" class="g" style="stroke:#bdb68e"/>
<use href="#ridB" x="539" y="933"/><use href="#ridB" x="569" y="925"/><use href="#ridB" x="599" y="918"/><use href="#ridB" x="628" y="909"/><use href="#ridB" x="658" y="901"/><use href="#ridB" x="688" y="892"/><use href="#ridB" x="717" y="882"/><use href="#ridB" x="746" y="872"/><use href="#ridB" x="775" y="861"/><use href="#ridB" x="804" y="851"/><use href="#ridB" x="834" y="839"/>
<path d="M422,954L526,932L539,933Q551,921 569,925Q581,913 599,918Q611,906 628,909Q640,897 658,901Q670,889 688,892Q700,880 717,882Q729,870 746,872Q758,860 775,861Q787,849 804,851Q816,839 834,839L846,828L968,777" class="b" style="stroke-width:1"/>
<path d="M329,917L422,954M329,917C340,945 355,965 371,962L452,992M422,954C430,980 455,1000 488,1003C495,1003 500,1003 506,1001L715,940L940,857L993,840L1079,809" class="b" style="stroke-width:1.200"/>

<!-- solid upper -->
<path d="M936,760C989,730 1023,690 1045,653L1196,601L1257,578L1321,542L1379,500L1400,485L1478,413L1652,238C1673,219 1700,201 1733,196C1767,196 1800,225 1823,265C1826,282 1825,300 1820,326C1810,378 1767,439 1733,465C1720,474 1705,480 1690,483C1640,490 1533,513 1467,544C1440,556 1418,568 1400,578C1375,597 1345,617 1323,633L1257,700L1223,738L1046,795L1079,808Z" fill="#cbb07c"/>
<!-- handle rim -->
<path d="M1009,640L1159,586L1186,575L1257,537L1321,500L1400,437L1442,399L1615,224.500C1633,208 1667,188 1700,181C1720,181 1740,188 1755,197C1747,197 1740,196 1733,196C1700,201 1673,219 1652,238L1478,413L1400,485L1379,500L1321,542L1257,578L1196,601L1045,653Z" fill="url(#rimg)"/>
<!-- ramp -->
<path d="M1009,640C1000,660 985,680 954,710C935,728 915,738 900,745L936,760C989,730 1023,690 1045,653Z" fill="#e7dda1"/>
<path d="M987,672C975,690 960,700 940,710L1023,688L1045,653Z" fill="#f9f8ba"/>
<path d="M1009,640C1000,660 992,668 987,672L1045,653Z" fill="#feffc2"/>
<path d="M950,658L1009,640C1003,655 995,663 987,672L965,660Z" fill="#e5d8bd"/>
<!-- tan overlay -->
<path d="M1045,653L1196,601L1230,615L1258,606L1023,688Z" fill="#dcc98f"/>
<path d="M936,760C989,730 1023,690 1045,653" class="b" style="stroke-width:1"/>
<path d="M1009,640C1003,655 995,663 987,672" class="b" style="stroke-width:1"/>
<path d="M987,672C975,690 965,700 954,710C935,728 915,738 900,745" class="g"/>
<path d="M900,745L936,760" class="b" style="stroke-width:.8"/>
<path d="M1009,640L1045,653M1159,586L1196,601" class="b" style="stroke-width:1.600"/>
<path d="M950,658L1009,640" class="g"/>
<path d="M900,722L1080,668L1258,606" class="g"/>
<path d="M973,625V672M1080,668V808M1258,606V753" class="g"/>
<path d="M1230,615C1260,622 1290,630 1330,633" class="g" style="stroke:#a09a86"/>
<!-- arcs over lower -->
<path d="M936,762C980,750 1030,770 1079,808M968,780C1000,768 1040,780 1079,808" class="g" style="stroke:#aaa"/>
<!-- cream strip -->
<path d="M968,775L1068,803L1079,809L968,778Z" fill="#f6dfae"/>
<path d="M968,778L1079,809" class="b"/>
<!-- handle outlines -->
<path d="M1196,601L1257,578L1321,542L1379,500L1400,485L1478,413L1652,238C1673,219 1700,201 1733,196C1767,196 1800,225 1823,265C1826,282 1825,300 1820,326C1810,378 1767,439 1733,465C1720,474 1705,480 1690,483C1640,490 1533,513 1467,544C1440,556 1418,568 1400,578C1375,597 1345,617 1323,633L1257,700L1223,738" class="b"/>
<path d="M1223,738L1046,795M1045,653L1196,601M1009,640L1159,586" fill="none" stroke="#444" stroke-width="1"/>
<path d="M1159,586L1186,575L1257,537L1321,500L1400,437L1442,399L1615,224.500C1633,208 1667,188 1700,181C1720,181 1740,188 1755,197" class="b" style="stroke-width:1"/>
<path d="M1442,399L1478,413M1615,224.500L1652,238" class="b" style="stroke-width:1.200"/>
<!-- solid hole -->
<g clip-path="url(#c1)"><rect x="1580" y="250" width="180" height="220" fill="url(#wall)"/><ellipse cx="1632.300" cy="347" rx="100.800" ry="68.900" transform="rotate(-69.600 1632.300 347)" fill="#fff" stroke="#111" stroke-width="1.200"/></g>
<ellipse cx="1669" cy="361" rx="100.800" ry="68.900" transform="rotate(-69.600 1669 361)" class="b" style="stroke-width:1.200"/>
<!-- pin -->
<path d="M1182,666L1218,682L1207,706L1171,690C1166,682 1172,664 1182,666Z" fill="url(#pin)" stroke="#6b4b3a"/>
<ellipse cx="1213" cy="695" rx="10" ry="13.500" transform="rotate(15 1213 695)" fill="#9a9080" stroke="#444"/>
<ellipse cx="1214" cy="695" rx="7.500" ry="11" transform="rotate(15 1214 695)" fill="#6b2a18" stroke="#111"/>
</g>
<text x="255" y="899" textLength="149" lengthAdjust="spacingAndGlyphs" style="font-size:12px;fill:#aaa">Stil-Zustand:Master-Stil(+)</text>

<!-- status bar -->
<rect x="0" y="1009" width="1920" height="37" fill="#eeeff1"/>
<rect x="0" y="1008" width="1920" height="2" fill="#a2a2a2"/>
<rect x="0" y="1044.500" width="1920" height="1.500" fill="#444"/>
<rect x="1770" y="1044.500" width="150" height="1.500" fill="#1d3a6a"/>
<path d="M6,1043V1020.500H28V1043" fill="#e4e6e8" stroke="#b8bac0"/>
<g fill="#fff" stroke="#334"><rect x="12" y="1023" width="4" height="4"/><rect x="12" y="1030" width="4" height="4"/><rect x="12" y="1037" width="4" height="4"/><rect x="20" y="1030" width="4" height="4"/><path d="M14,1027v3M14,1034v3M16,1032h4" fill="none"/></g>
<rect x="33.500" y="1020.500" width="20" height="22" fill="#f1f2f3" stroke="#ddd"/>
<circle cx="43" cy="1031" r="7.500" fill="#38a860" stroke="#f0a020" stroke-width="2"/><path d="M39,1034c2,-6 5,-8 8,-8c-1,4 -3,7 -6,9z" fill="#2a88d8"/>
<path d="M25,1046a10,10 0 0 1 20,0z" fill="#3a4a6a" stroke="#8a9ab0"/>
<path d="M63.500,1020V1042" stroke="#ccc"/>
<circle cx="73.500" cy="1024" r="2.500" fill="#1818e0"/>
<text x="85" y="1029" textLength="259" lengthAdjust="spacingAndGlyphs" style="font-size:12.5px;fill:#4c4c58;stroke:#4c4c58;stroke-width:.3">Schattiertes Modell mit Kanten wird angezeigt</text>

<!-- status right -->
<path d="M1188.500,1012V1042M1507.500,1012V1042M1539.500,1012V1042" stroke="#ccc"/>
<g>
<rect x="1197" y="1020" width="13" height="14" fill="#fff" stroke="#123a90" stroke-width="1.500"/><circle cx="1204" cy="1026" r="4" fill="none" stroke="#555"/><path d="M1206,1030l6,7" stroke="#8a4a20" stroke-width="2"/>
<circle cx="1225" cy="1026" r="6" fill="#f6f6f6" stroke="#666"/><path d="M1222,1026h6M1225,1023v6" stroke="#111" stroke-width="1.500"/><path d="M1229,1031l5,6" stroke="#8a4a20" stroke-width="2"/>
<circle cx="1249" cy="1026" r="6" fill="#f6f6f6" stroke="#666"/><path d="M1246,1026h6" stroke="#111" stroke-width="1.500"/><path d="M1253,1031l5,6" stroke="#8a4a20" stroke-width="2"/>
<rect x="1270" y="1020" width="13" height="16" fill="#dfefff" stroke="#123a90" stroke-width="1.500"/><path d="M1272,1034l9,-12" stroke="#5a90c0" stroke-dasharray="2 1"/>
<path d="M1298,1020h10v11l-5,5z" fill="#8ff" stroke="#111"/><rect x="1293" y="1025" width="10" height="11" fill="#fff" stroke="#111" stroke-width="1.500"/><path d="M1293,1025l5,-5M1303,1025l5,-5" stroke="#111"/>
<use href="#dd" x="1319" y="1024"/>
<path d="M1331,1024h10v10h-10z" fill="#dff" stroke="#889"/><text x="1335" y="1028" style="font-size:9px;fill:#333">AB</text>
<use href="#dd" x="1357" y="1024"/>
<rect x="1369" y="1019" width="12" height="14" fill="#fff" stroke="#667"/><rect x="1372" y="1027" width="13" height="10" fill="#556" stroke="#222"/><circle cx="1378.500" cy="1032" r="3" fill="#dde"/>
<g stroke="#8a4a20" stroke-width="1.500" fill="none"><path d="M1392,1018l4,5M1396,1018l-4,5M1402,1018v7M1407,1026l-7,9M1398,1026l8,9M1390,1037l5,-5"/></g>
<use href="#dd" x="1419" y="1024"/>
<rect x="1431" y="1019" width="9" height="6" fill="#f6e060" stroke="#555"/><circle cx="1441" cy="1034" r="4" fill="#889" stroke="#333"/><path d="M1438,1027h8l-6,4" fill="none" stroke="#333"/>
<path d="M1456,1021v6l4,4l-4,4M1462,1029h6" fill="none" stroke="#444"/><circle cx="1456" cy="1020" r="2.500" fill="#2a9"/><circle cx="1456" cy="1036" r="2.500" fill="#2ac"/><circle cx="1467" cy="1028" r="2.500" fill="#e01010"/>
</g>
<circle cx="1515.500" cy="1028" r="5.500" fill="#4fd44f"/><circle cx="1526" cy="1028" r="3.500" fill="#ccc"/><circle cx="1533" cy="1028" r="3" fill="#ccc"/>
<rect x="1542.500" y="1014.500" width="39" height="27" rx="3" fill="#f1f2f3" stroke="#bbb"/>
<path d="M1556,1021h5v16h-5zM1564,1021h5v16h-5z" fill="#555" stroke="#222"/><path d="M1561,1025h3v7h-3z" fill="#bbb" stroke="#222"/>
<rect x="1589.500" y="1014.500" width="38" height="27" rx="3" fill="#f1f2f3" stroke="#bbb"/>
<rect x="1601" y="1024" width="11" height="12" fill="#fff" stroke="#111"/><path d="M1601,1024l5,-5h11v12l-5,5M1612,1024l5,-5" fill="none" stroke="#111"/><rect x="1603" y="1027" width="5" height="6" fill="#2ac"/><rect x="1605" y="1027" width="3" height="3" fill="#ee0"/>
<rect x="1724.500" y="1016.500" width="178" height="22" fill="#f3f4f5" stroke="#c4c4c8"/>
<path d="M1888.500,1017V1038" stroke="#c4c4c8"/>
<use href="#dd" x="1894.500" y="1028"/>
<text x="1731" y="1032" textLength="34" lengthAdjust="spacingAndGlyphs">Smart</text>
</svg>
</body></html>
